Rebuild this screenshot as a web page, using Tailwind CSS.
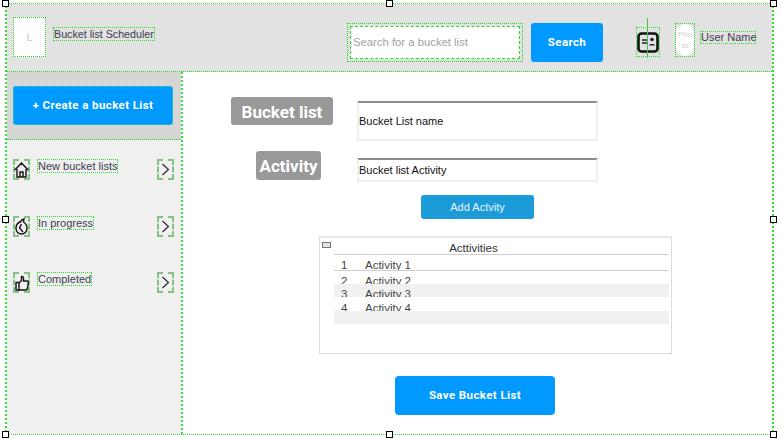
<!DOCTYPE html>
<html>
<head>
<meta charset="utf-8">
<script src="https://cdn.jsdelivr.net/npm/@tailwindcss/browser@4"></script>
</head>
<body class="bg-white font-['Liberation_Sans',Arial,sans-serif]">
<div class="relative w-[781px] h-[439px] overflow-hidden pl-[5px] pt-[3px]">
  <div class="w-[769px] h-[432px] flex flex-col border-y border-x-2 border-dotted border-[#2fe02f]">
    <header class="h-[68px] shrink-0 flex bg-[#e2e2e2] border-b border-dotted border-[#22d822] relative">
      <div class="ml-[6px] mt-[13px] w-[33px] h-[40px] bg-white border border-dotted border-[#22d822] flex items-center justify-center text-[11px] text-[#c8c8c8]">L</div>
      <div class="ml-[7px] mt-[23px] h-[14px] w-[102px] border border-dotted border-[#22e022] text-[10.7px] leading-[12px] text-[#3c3c50] whitespace-nowrap">Bucket list Scheduler</div>
      <div class="ml-[192px] mt-[19px] w-[176px] h-[39px] border border-dotted border-[#22d822] p-[2px]">
        <div class="h-full border border-dashed border-[#22e022] bg-white flex items-center pl-[2px] text-[11.3px] text-[#a3a3a3] whitespace-nowrap">Search for a bucket list</div>
      </div>
      <div class="ml-[8px] mt-[19px] w-[72px] h-[39px] rounded-[3px] bg-[#0099ff] flex items-center justify-center text-[11.5px] font-bold text-white tracking-[0.4px] font-['Roboto',sans-serif]">Search</div>
      <div class="ml-[33px] mt-[23px] w-[24px] h-[30px] border border-dotted border-[#22e022] flex items-center justify-center relative">
        <svg class="shrink-0" width="22" height="21" viewBox="0 0 22 21" fill="none">
          <rect x="1.5" y="1.5" width="19" height="18" rx="3" stroke="#111" stroke-width="2.6"/>
          <path d="M5 8h5M5 11h5" stroke="#222" stroke-width="1.6"/>
          <circle cx="15" cy="7.5" r="1.8" fill="#222"/>
          <path d="M12 13.5c0-2 6-2 6 0z" fill="#222"/>
        </svg>
        <div class="absolute left-[10px] top-[-10px] w-px h-[40px] bg-[#44c844]"></div>
      </div>
      <div class="ml-[15px] mt-[19px] w-[20px] h-[34px] border border-dotted border-[#22e022]">
        <div class="w-full h-full rounded-[10px] bg-white flex items-center justify-center text-center text-[8px] leading-[11px] text-[#cfcfcf]">Pho<br>to</div>
      </div>
      <div class="ml-[5px] mt-[27px] h-[13px] w-[56px] border border-dotted border-[#22e022] text-[11px] leading-[11px] text-[#3c3c50] whitespace-nowrap">User Name</div>
    </header>
    <div class="flex-1 flex min-h-0">
      <aside class="w-[176px] shrink-0 flex flex-col border-r-2 border-dotted border-[#2fe02f]">
        <div class="h-[68px] shrink-0 bg-[#d6d6d6] border-b border-dotted border-[#22d822] pl-[6px] pt-[14px]">
          <div class="w-[160px] h-[39px] rounded-[3px] bg-[#0099ff] border border-dotted border-[#3fd8a0] flex items-center justify-center text-[11.5px] font-bold text-white tracking-[0.4px] font-['Roboto',sans-serif]">+ Create a bucket List</div>
        </div>
        <nav class="flex-1 bg-[#f0f0f0] pt-[19px] pl-[6px] flex flex-col gap-[35.5px]">
          <div class="flex h-[21px] gap-[7px]">
            <div class="w-[17px] h-[21px] border-2 border-dashed border-[#85c285] flex items-center justify-center">
              <svg class="shrink-0" width="15" height="16" viewBox="0 0 15 16" fill="none" stroke="#111" stroke-width="1.4"><path d="M.8 8L7.5 1l6.7 7M3 7v8h9V7M6 15v-5h3v5"/></svg>
            </div>
            <div class="h-[14px] border border-dotted border-[#22e022] text-[11px] leading-[12px] text-[#3c3c50] whitespace-nowrap">New bucket lists</div>
            <div class="ml-auto mr-[7px] w-[17px] h-[21px] border-2 border-dashed border-[#85c285] flex items-center justify-center">
              <svg class="shrink-0" width="9" height="13" viewBox="0 0 9 13" fill="none" stroke="#222" stroke-width="1.1"><path d="M1.5 1l6 5.5-6 5.5"/></svg>
            </div>
          </div>
          <div class="flex h-[21px] gap-[7px]">
            <div class="w-[17px] h-[21px] border-2 border-dashed border-[#85c285] flex items-center justify-center">
              <svg class="shrink-0" width="13" height="17" viewBox="0 0 13 17" fill="none" stroke="#111" stroke-width="1.4"><path d="M6 3.5C2.5 4.5 1 7.5 1 10.5c0 3.2 2.5 5.5 5.5 5.5s5.5-2.3 5.5-5.5c0-2.500-1-5-3.500-6.500L9 1 6.500 2z"/><path d="M6.500 6l-2 4 3.500 4"/></svg>
            </div>
            <div class="h-[14px] border border-dotted border-[#22e022] text-[11px] leading-[12px] text-[#3c3c50] whitespace-nowrap">In progress</div>
            <div class="ml-auto mr-[7px] w-[17px] h-[21px] border-2 border-dashed border-[#85c285] flex items-center justify-center">
              <svg class="shrink-0" width="9" height="13" viewBox="0 0 9 13" fill="none" stroke="#222" stroke-width="1.1"><path d="M1.5 1l6 5.5-6 5.5"/></svg>
            </div>
          </div>
          <div class="flex h-[21px] gap-[7px]">
            <div class="w-[17px] h-[21px] border-2 border-dashed border-[#85c285] flex items-center justify-center">
              <svg class="shrink-0" width="14" height="16" viewBox="0 0 14 16" fill="none" stroke="#111" stroke-width="1.4"><path d="M1 7.500h3v7.500H1zM4 8l2.500-2.500V1.500C8 1 8.500 2.500 8.500 3.500V6H12c1.200 0 1.500 1 1.300 2l-1 6c-.2.700-.6 1-1.300 1H4"/></svg>
            </div>
            <div class="h-[14px] border border-dotted border-[#22e022] text-[11px] leading-[12px] text-[#3c3c50] whitespace-nowrap">Completed</div>
            <div class="ml-auto mr-[7px] w-[17px] h-[21px] border-2 border-dashed border-[#85c285] flex items-center justify-center">
              <svg class="shrink-0" width="9" height="13" viewBox="0 0 9 13" fill="none" stroke="#222" stroke-width="1.1"><path d="M1.5 1l6 5.5-6 5.5"/></svg>
            </div>
          </div>
        </nav>
      </aside>
      <main class="flex-1 bg-white flex flex-col">
        <div class="flex mt-[25px]">
          <div class="ml-[48px] w-[102px] h-[28px] pt-[3px] rounded-[3px] bg-[#999999] flex items-center justify-center text-[17px] font-bold text-white font-['Roboto',sans-serif]">Bucket list</div>
          <div class="ml-[24px] mt-[4px] w-[241px] h-[40px] border-2 border-[#efefef] border-t-[#8c8c8c] bg-white flex items-center text-[11px] text-[#111]">Bucket List name</div>
        </div>
        <div class="flex mt-[10px]">
          <div class="ml-[73px] w-[65px] h-[29px] pt-[2px] rounded-[3px] bg-[#999999] flex items-center justify-center text-[17px] font-bold text-white font-['Roboto',sans-serif] whitespace-nowrap">Activity</div>
          <div class="ml-[36px] mt-[7px] w-[241px] h-[24px] border-2 border-[#efefef] border-t-[#8c8c8c] bg-white flex items-center text-[11px] text-[#111]">Bucket list Activity</div>
        </div>
        <div class="ml-[238px] mt-[13px] w-[113px] h-[24px] pt-[1px] rounded-[3px] bg-[#1b9cd8] flex items-center justify-center text-[11px] text-[#e8f4fb]">Add Actvity</div>
        <div class="ml-[136px] mt-[17px] w-[353px] h-[118px] border border-t-2 border-[#dcdcdc] border-t-[#e8e8e8] relative pl-[14px]">
          <div class="absolute left-[2px] top-[4px] w-[9px] h-[6px] border border-[#777] bg-[#e4e4e4]"></div>
          <div class="h-[17px] border-b border-[#cfcfcf] pr-[56px] text-center text-[11.5px] leading-[20px] text-[#333] mr-[2px]">Acttivities</div>
          <div class="h-[16px] border-b border-[#cfcfcf] flex text-[11.5px] leading-[20px] text-[#444] overflow-hidden mr-[2px]"><span class="w-[31px] pl-[7px]">1</span><span>Activity 1</span></div>
          <div class="h-[13px] flex text-[11.5px] leading-[20px] text-[#444] overflow-hidden mr-[2px]"><span class="w-[31px] pl-[7px]">2</span><span>Activity 2</span></div>
          <div class="h-[13px] bg-[#f1f1f1] flex text-[11.5px] leading-[20px] text-[#444] overflow-hidden mr-[2px]"><span class="w-[31px] pl-[7px]">3</span><span>Activity 3</span></div>
          <div class="h-[14px] flex text-[11.5px] leading-[22px] text-[#444] overflow-hidden mr-[2px]"><span class="w-[31px] pl-[7px]">4</span><span>Activity 4</span></div>
          <div class="h-[13px] bg-[#f1f1f1] mr-[2px]"></div>
        </div>
        <div class="ml-[212px] mt-[22px] w-[160px] h-[39px] rounded-[4px] bg-[#0099ff] flex items-center justify-center text-[11.5px] font-bold text-white tracking-[0.4px] font-['Roboto',sans-serif]">Save Bucket List</div>
      </main>
    </div>
  </div>
  <div class="absolute left-[2px] top-0 w-[7px] h-[7px] border border-black bg-white"></div>
  <div class="absolute left-[386px] top-0 w-[7px] h-[7px] border border-black bg-white"></div>
  <div class="absolute left-[770px] top-0 w-[7px] h-[7px] border border-black bg-white"></div>
  <div class="absolute left-[2px] top-[216px] w-[7px] h-[7px] border border-black bg-white"></div>
  <div class="absolute left-[770px] top-[216px] w-[7px] h-[7px] border border-black bg-white"></div>
  <div class="absolute left-[2px] top-[431px] w-[7px] h-[7px] border border-black bg-white"></div>
  <div class="absolute left-[386px] top-[431px] w-[7px] h-[7px] border border-black bg-white"></div>
  <div class="absolute left-[770px] top-[431px] w-[7px] h-[7px] border border-black bg-white"></div>
</div>
</body>
</html>
